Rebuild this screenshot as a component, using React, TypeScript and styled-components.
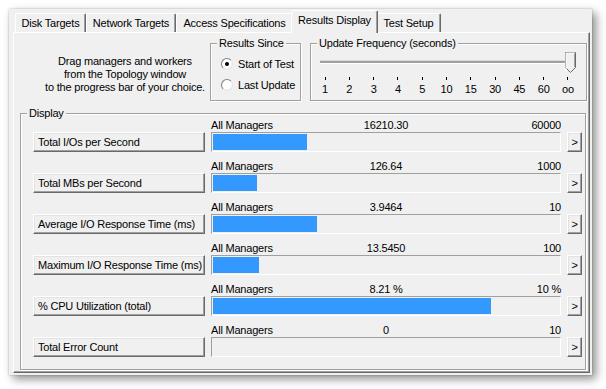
import React from 'react';
import styled, { createGlobalStyle } from 'styled-components';

const GlobalStyle = createGlobalStyle`
  html, body { margin: 0; padding: 0; background: #fff; }
  body {
    font-family: "Liberation Sans", Arial, sans-serif;
    font-size: 11px;
    letter-spacing: -0.2px;
    color: #000;
  }
`;

const Page = styled.div`
  width: 606px;
  height: 389px;
  box-sizing: border-box;
  padding: 9px 0 0 9px;
  overflow: hidden;
`;

const Window = styled.div`
  width: 583px;
  height: 366px;
  box-sizing: border-box;
  padding: 1px 0 0 4px;
  background: #f0f0f0;
  box-shadow: 4px 4px 9px rgba(0, 0, 0, 0.45), 0 0 2px rgba(0, 0, 0, 0.25);
  display: flex;
  flex-direction: column;
`;

const TabStrip = styled.div`
  display: flex;
  align-items: flex-end;
  height: 22px;
  padding-left: 2px;
  position: relative;
  z-index: 1;
`;

const Tab = styled.div<{ $w: number; $active?: boolean }>`
  width: ${({ $w }) => $w}px;
  height: ${({ $active }) => ($active ? 23 : 19)}px;
  margin: ${({ $active }) => ($active ? '0 -2px -1px -2px' : '0')};
  box-sizing: border-box;
  background: #f0f0f0;
  border-top: 1px solid #fff;
  border-left: 1px solid #fff;
  border-right: 1px solid #696969;
  border-radius: 2px 2px 0 0;
  box-shadow: inset -1px 0 0 #a0a0a0;
  display: flex;
  align-items: ${({ $active }) => ($active ? 'flex-start' : 'center')};
  padding-top: ${({ $active }) => ($active ? 3 : 0)}px;
  justify-content: center;
  white-space: nowrap;
  position: relative;
  z-index: ${({ $active }) => ($active ? 2 : 1)};
`;

const TabPanel = styled.div`
  width: 577px;
  height: 341px;
  box-sizing: border-box;
  border-top: 1px solid #fff;
  border-left: 1px solid #fff;
  border-right: 1px solid #696969;
  border-bottom: 1px solid #696969;
  box-shadow: inset -1px -1px 0 #a0a0a0;
`;

const TopRow = styled.div`
  display: flex;
  align-items: flex-start;
  padding-top: 10px;
`;

const Hint = styled.div`
  width: 170px;
  margin-left: 26px;
  padding-top: 12px;
  text-align: center;
  line-height: 13px;
`;

const GroupBox = styled.div<{ $w: number; $h: number; $ml?: number }>`
  width: ${({ $w }) => $w}px;
  height: ${({ $h }) => $h}px;
  margin-left: ${({ $ml }) => $ml ?? 0}px;
  box-sizing: border-box;
  border: 1px solid #a0a0a0;
  box-shadow: inset 1px 1px 0 #fff, 1px 1px 0 #fff;
`;

const GroupTitle = styled.div`
  display: table;
  margin: -7px 0 0 6px;
  padding: 0 2px;
  line-height: 13px;
  background: #f0f0f0;
`;

const RadioList = styled.div`
  padding: 3px 0 0 10px;
`;

const RadioRow = styled.div`
  height: 21px;
  display: flex;
  align-items: center;
  gap: 5px;
`;

const RadioDot = styled.span<{ $checked?: boolean }>`
  width: 12px;
  height: 12px;
  box-sizing: border-box;
  border-radius: 50%;
  border: 1px solid;
  border-color: #808080 #e8e8e8 #e8e8e8 #808080;
  background: radial-gradient(circle at 45% 45%, #fff 55%, #e2e2e2 100%);
  display: flex;
  align-items: center;
  justify-content: center;
  &::after {
    content: '';
    width: 4px;
    height: 4px;
    border-radius: 50%;
    background: #000;
    display: ${({ $checked }) => ($checked ? 'block' : 'none')};
  }
`;

const SliderArea = styled.div`
  padding: 2px 0 0 9px;
`;

const TrackRow = styled.div`
  width: 256px;
  height: 20px;
  position: relative;
  display: flex;
  align-items: center;
`;

const Track = styled.div`
  width: 253px;
  height: 2px;
  background: #a0a0a0;
  border-bottom: 1px solid #fff;
  border-top: 1px solid #dcdcdc;
`;

const Thumb = styled.svg`
  position: absolute;
  left: 245px;
  top: 0;
`;

const ScaleRow = styled.div<{ $mt: number }>`
  width: 263px;
  margin: ${({ $mt }) => $mt}px 0 0 -5px;
  display: flex;
  justify-content: space-between;
`;

const TickCell = styled.span`
  width: 20px;
  height: 3px;
  display: flex;
  justify-content: center;
  &::after {
    content: '';
    width: 1px;
    height: 3px;
    background: #000;
  }
`;

const ScaleLabel = styled.span`
  width: 20px;
  text-align: center;
  line-height: 13px;
`;

const DisplayBox = styled(GroupBox)`
  margin-top: 12px;
  padding: 0;
`;

const Rows = styled.div`
  padding: 0 0 0 12px;
  margin-top: -1px;
  display: flex;
  flex-direction: column;
  gap: 8px;
`;

const MeterRow = styled.div`
  display: grid;
  grid-template-columns: 172px 350px 15px;
  grid-template-rows: 13px 20px;
  column-gap: 6px;
`;

const MeterCaption = styled.div`
  grid-column: 2;
  grid-row: 1;
  display: grid;
  grid-template-columns: 1fr auto 1fr;
  line-height: 13px;
  white-space: nowrap;
`;

const MaxValue = styled.span`
  justify-self: end;
`;

const ClassicButton = styled.button`
  font: inherit;
  letter-spacing: inherit;
  color: #000;
  height: 20px;
  margin: 0;
  padding: 0 0 0 4px;
  box-sizing: border-box;
  background: #f0f0f0;
  border: 1px solid;
  border-color: #fff #696969 #696969 #fff;
  box-shadow: inset -1px -1px 0 #a0a0a0, inset 1px 1px 0 #e3e3e3;
  text-align: left;
  white-space: nowrap;
`;

const MetricButton = styled(ClassicButton)`
  grid-column: 1;
  grid-row: 2;
`;

const ArrowButton = styled(ClassicButton)`
  grid-column: 3;
  grid-row: 2;
  width: 15px;
  padding: 0;
  text-align: center;
`;

const Bar = styled.div`
  grid-column: 2;
  grid-row: 2;
  box-sizing: border-box;
  border: 1px solid;
  border-color: #a0a0a0 #fff #fff #a0a0a0;
  padding: 1px;
  display: flex;
`;

const BarFill = styled.div`
  background: #3399ff;
  height: 100%;
`;

const TABS = [
  { label: 'Disk Targets', w: 71 },
  { label: 'Network Targets', w: 90 },
  { label: 'Access Specifications', w: 117 },
  { label: 'Results Display', w: 87, active: true },
  { label: 'Test Setup', w: 65 },
];

const SCALE = ['1', '2', '3', '4', '5', '10', '15', '30', '45', '60', 'oo'];

const METRICS = [
  { name: 'Total I/Os per Second', value: '16210.30', max: '60000', fill: 0.272 },
  { name: 'Total MBs per Second', value: '126.64', max: '1000', fill: 0.128 },
  { name: 'Average I/O Response Time (ms)', value: '3.9464', max: '10', fill: 0.3 },
  { name: 'Maximum I/O Response Time (ms)', value: '13.5450', max: '100', fill: 0.132 },
  { name: '% CPU Utilization (total)', value: '8.21 %', max: '10 %', fill: 0.804 },
  { name: 'Total Error Count', value: '0', max: '10', fill: 0 },
];

export default function App() {
  return (
    <Page>
      <GlobalStyle />
      <Window>
        <TabStrip>
          {TABS.map(t => (
            <Tab key={t.label} $w={t.w} $active={t.active}>{t.label}</Tab>
          ))}
        </TabStrip>
        <TabPanel>
          <TopRow>
            <Hint>
              Drag managers and workers<br />
              from the Topology window<br />
              to the progress bar of your choice.
            </Hint>
            <GroupBox $w={91} $h={58}>
              <GroupTitle>Results Since</GroupTitle>
              <RadioList>
                <RadioRow><RadioDot $checked />Start of Test</RadioRow>
                <RadioRow><RadioDot />Last Update</RadioRow>
              </RadioList>
            </GroupBox>
            <GroupBox $w={277} $h={58} $ml={9}>
              <GroupTitle>Update Frequency (seconds)</GroupTitle>
              <SliderArea>
                <TrackRow>
                  <Track />
                  <Thumb width="11" height="21" viewBox="0 0 11 21">
                    <path d="M0.5 0.5 H10.5 V15.5 L5.5 20.5 L0.5 15.5 Z" fill="#f0f0f0" stroke="#696969" />
                    <path d="M1 19.5 V1 H10" fill="none" stroke="#fff" />
                    <path d="M9.5 1.5 V15.2" fill="none" stroke="#a0a0a0" />
                  </Thumb>
                </TrackRow>
                <ScaleRow $mt={5}>
                  {SCALE.map(s => <TickCell key={s} />)}
                </ScaleRow>
                <ScaleRow $mt={3}>
                  {SCALE.map(s => <ScaleLabel key={s}>{s}</ScaleLabel>)}
                </ScaleRow>
              </SliderArea>
            </GroupBox>
          </TopRow>
          <DisplayBox $w={566} $h={257} $ml={6}>
            <GroupTitle>Display</GroupTitle>
            <Rows>
              {METRICS.map(m => (
                <MeterRow key={m.name}>
                  <MeterCaption>
                    <span>All Managers</span>
                    <span>{m.value}</span>
                    <MaxValue>{m.max}</MaxValue>
                  </MeterCaption>
                  <MetricButton>{m.name}</MetricButton>
                  <Bar>
                    <BarFill style={{ width: `${m.fill * 100}%` }} />
                  </Bar>
                  <ArrowButton>&gt;</ArrowButton>
                </MeterRow>
              ))}
            </Rows>
          </DisplayBox>
        </TabPanel>
      </Window>
    </Page>
  );
}
